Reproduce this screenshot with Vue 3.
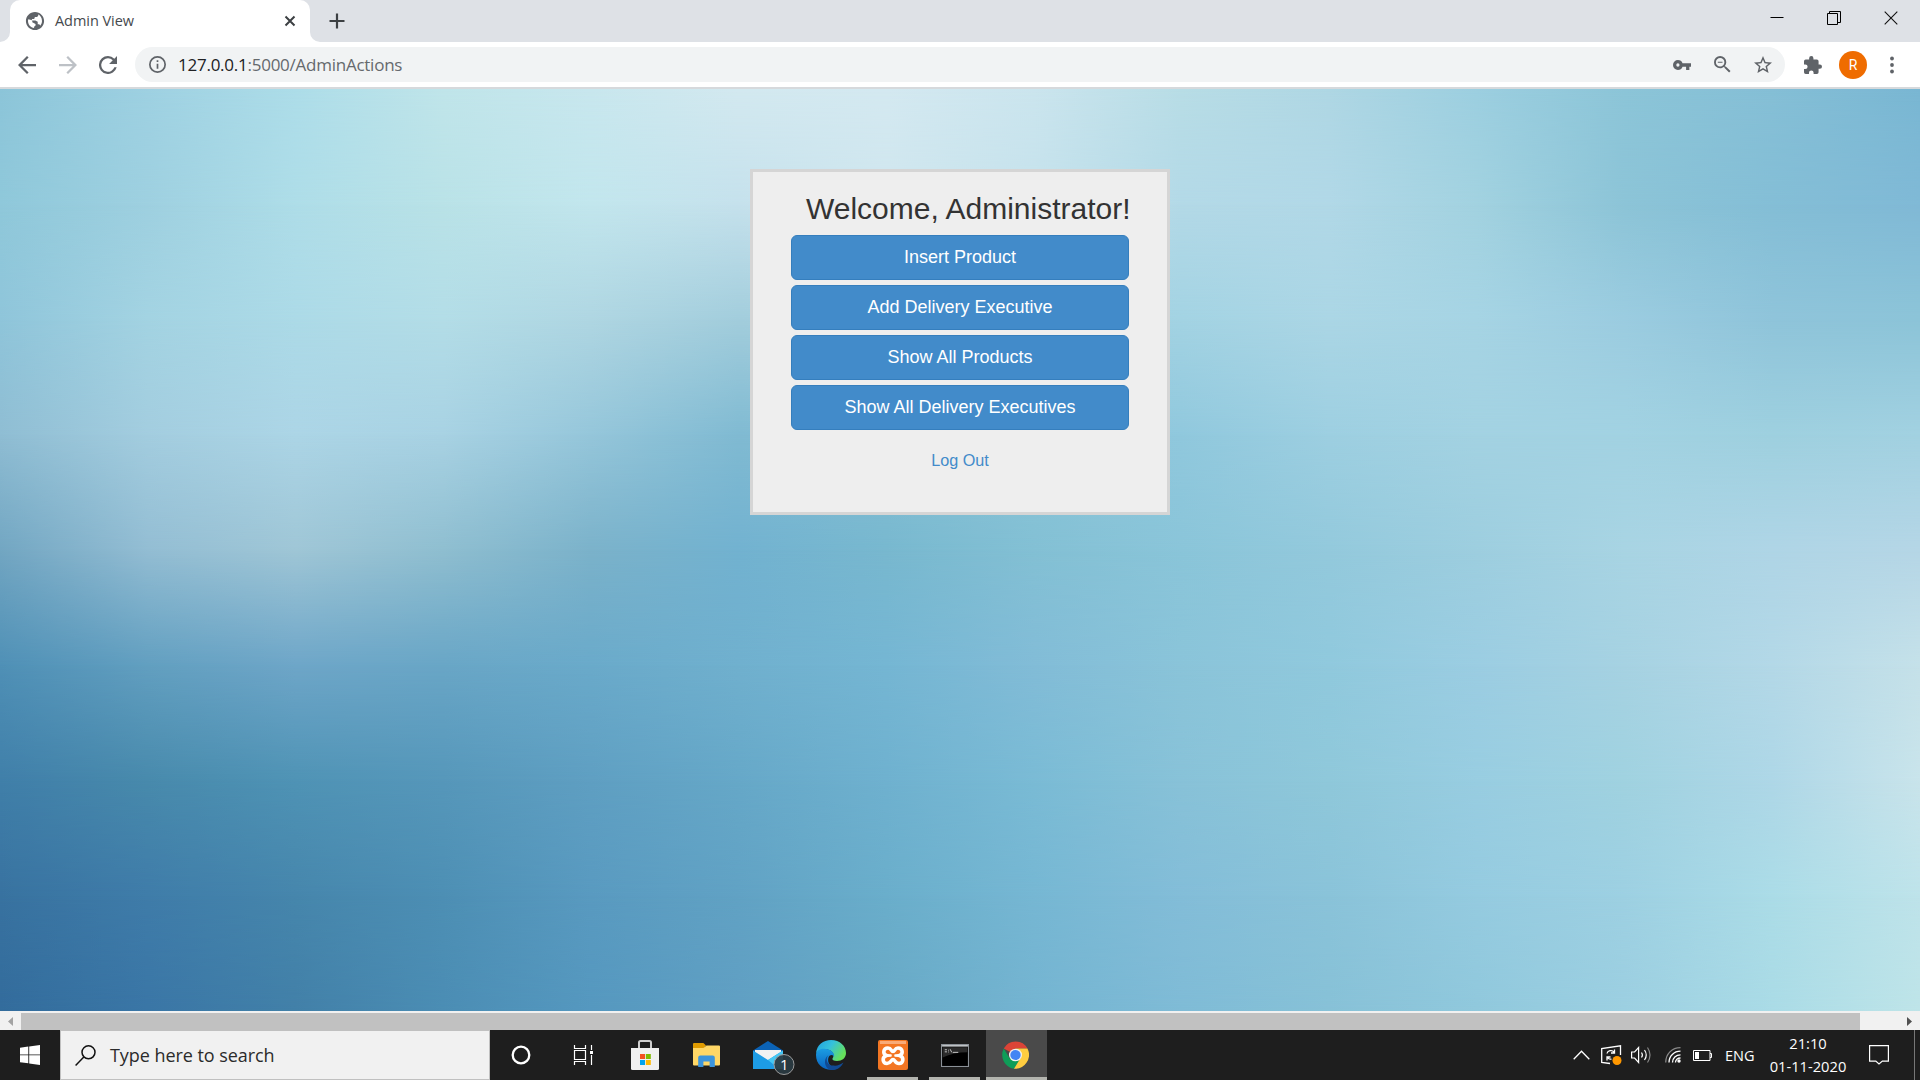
<script setup>
const actions = ['Insert Product', 'Add Delivery Executive', 'Show All Products', 'Show All Delivery Executives']

// Colour mesh for the page backdrop: each row is a horizontal ramp,
// faded in over the row above it.
const mesh = [
  '8cc5d9 9ed1e2 addde9 c0e5ea c8e7ee d3e9f0 d4e9f1 cbe5ee b8dde6 afd7e4 9ccfe0 8cc5d8 85bfd6 79b7d3',
  '8fc8da 9ed0e0 aedde8 b9e2e7 c2e6ed c5e1ec cfe6ee c5e2ec b3d9e7 b1d8e7 a2d2e0 8cc4d7 84bed6 80b9d6',
  '8fc5da a3d3e2 acdae7 b3dde7 afd6e2 a2cddc a5d0de 9fcfde a3d3e3 abd6e5 a6d4e4 9bcce0 8fc4da 8cc4d8',
  '8fbdd3 a3cddf acd5e6 a8d2e3 95c6da 80bad2 85bfd4 8ac4d8 90c8dd 9dcfe1 a3d2e2 a2d2e2 9ed0df a2d1e1',
  '72a6c2 93bdd3 9fc6d6 8fbed0 7bb2ca 72b2d0 78b8cf 83c0d4 8ac5d9 93c9dc 9dcedf a8d4e3 afd5e6 b5d6e6',
  '4f90b6 629fc0 6ea6c8 69a6c6 6aaaca 70b0ce 75b6d3 82bcd7 8ac4d9 90c9dd 9bcde2 a6d2e2 b3d8e7 c5e1e9',
  '407fa9 488aac 4f93b5 5697ba 5f9fc2 66a8c8 6fb1cf 7abbd5 88c2d8 8fc8da 98cde1 a0d2e0 aed7e7 c9e4eb',
  '3872a0 3f7ca9 4686ac 4d8fb4 599ac0 61a2c4 6aaecb 76b7d3 83bdd8 8ac3d9 95cbe0 9dd0e2 abdce7 bee3ea',
  '336c9c 3a76a6 4280a8 4b8db4 5598bf 609fc3 68a9c6 74b4d1 7fbbd6 87c1d7 90c8dc 9ccfe1 aadbe6 bee4e8'
]
const layers = mesh.map((row, i) => {
  const style = { background: `linear-gradient(to right, ${row.split(' ').map(c => '#' + c).join(', ')})` }
  if (i) {
    const step = 100 / (mesh.length - 1)
    style.maskImage = `linear-gradient(to bottom, transparent ${(i - 1) * step}%, #000 ${i * step}%)`
  }
  return style
})
</script>

<template>
  <div class="screen">
    <header class="tabs">
      <svg class="flare" width="10" height="10" viewBox="0 0 10 10"><path d="M10 0v10H0A10 10 0 0 0 10 0Z" fill="#fff"/></svg>
      <div class="tab">
        <svg width="20" height="20" viewBox="1 1 22 22"><path fill="#5f6368" d="M12 2C6.480 2 2 6.480 2 12s4.480 10 10 10 10-4.480 10-10S17.520 2 12 2zM4.300 12C4.300 11.300 4.400 10.600 4.600 10L9 11.200v2.300l3.600 1.800v1.700l-1.600 1.300v1.500C7.200 19.300 4.300 16 4.300 12zM17.800 17.100C17.500 16.100 16.800 15.500 16 15.500h-1v-2.600l-2.600-1.500H8.600V9.700h2.500l.8-2.100h2.500l1.300-1.800V4.700C18 6 19.700 8.800 19.700 12c0 1.900-.7 3.700-1.900 5.100z"/></svg>
        <span class="title">Admin View</span>
        <svg class="x" width="12" height="12" viewBox="0 0 12 12"><path d="M1.500 1.500l9 9M10.500 1.500l-9 9" stroke="#3c4043" stroke-width="2"/></svg>
      </div>
      <svg class="flare" width="10" height="10" viewBox="0 0 10 10"><path d="M0 0v10h10A10 10 0 0 1 0 0Z" fill="#fff"/></svg>
      <svg class="plus" width="16" height="16" viewBox="0 0 16 16"><path d="M8 .5v15M.5 8h15" stroke="#3c4043" stroke-width="2.200"/></svg>
      <div class="winctl">
        <svg width="14" height="14" viewBox="0 0 14 14"><path d="M.5 6.500h13" stroke="#000"/></svg>
        <svg width="14" height="14" viewBox="0 0 14 14"><path d="M.5 2.500h10v11H.5zM2.500 2.500v-2h11v11h-3" fill="none" stroke="#000"/></svg>
        <svg width="14" height="14" viewBox="0 0 14 14"><path d="M.7.7l12.600 12.600M13.300.7L.7 13.300" stroke="#111" stroke-width="1.100"/></svg>
      </div>
    </header>

    <nav class="toolbar">
      <svg class="back" width="18" height="18" viewBox="4 4 16 16"><path fill="#5f6368" d="M20 11H7.830l5.590-5.590L12 4l-8 8 8 8 1.410-1.410L7.830 13H20v-2z"/></svg>
      <svg class="fwd" width="18" height="18" viewBox="4 4 16 16"><path fill="#bdc1c6" d="M12 4l-1.410 1.410L16.170 11H4v2h12.170l-5.580 5.590L12 20l8-8z"/></svg>
      <svg class="reload" width="18" height="18" viewBox="4 4 16 16"><path fill="#5f6368" d="M17.650 6.350A7.958 7.958 0 0 0 12 4a8 8 0 1 0 7.730 10h-2.080A6 6 0 1 1 12 6c1.660 0 3.140.69 4.220 1.780L13 11h7V4l-2.350 2.350z"/></svg>
      <div class="omnibox">
        <svg width="17" height="17" viewBox="2 2 20 20"><path fill="#5f6368" d="M11 7h2v2h-2zm0 4h2v6h-2zm1-9a10 10 0 1 0 0 20 10 10 0 0 0 0-20zm0 18a8 8 0 1 1 0-16 8 8 0 0 1 0 16z"/></svg>
        <span class="url"><b>127.0.0.1</b>:5000/AdminActions</span>
        <svg class="key" width="18" height="10" viewBox="1 6 22 12"><path fill="#5f6368" d="M12.650 10A5.990 5.990 0 0 0 7 6a6 6 0 0 0 0 12 5.990 5.990 0 0 0 5.650-4H17v4h4v-4h2v-4H12.650zM7 14a2 2 0 1 1 0-4 2 2 0 0 1 0 4z"/></svg>
        <svg class="mag" width="17" height="17" viewBox="3 3 18 18"><path fill="#5f6368" d="M15.500 14h-.79l-.28-.27A6.471 6.471 0 0 0 16 9.500 6.500 6.500 0 1 0 9.500 16c1.610 0 3.090-.59 4.230-1.570l.27.28v.79l5 4.990L20.490 19l-4.990-5zm-6 0a4.500 4.500 0 1 1 0-9 4.500 4.500 0 0 1 0 9zM7 9h5v1.100H7z"/></svg>
        <svg class="star" width="18" height="18" viewBox="2 2 20 20"><path fill="#5f6368" d="M22 9.240l-7.190-.62L12 2 9.190 8.630 2 9.240l5.460 4.730L5.820 21 12 17.270 18.180 21l-1.630-7.030L22 9.240zM12 15.400l-3.760 2.270 1-4.280-3.320-2.880 4.380-.38L12 6.100l1.710 4.040 4.380.38-3.320 2.880 1 4.280L12 15.400z"/></svg>
      </div>
      <svg class="puzzle" width="18" height="18" viewBox="2 1 21 21"><path fill="#5f6368" d="M20.500 11H19V7a2 2 0 0 0-2-2h-4V3.500a2.500 2.500 0 0 0-5 0V5H4a2 2 0 0 0-2 2v3.800h1.500a2.700 2.700 0 0 1 0 5.400H2V20a2 2 0 0 0 2 2h3.800v-1.500a2.700 2.700 0 0 1 5.400 0V22H17a2 2 0 0 0 2-2v-4h1.500a2.500 2.500 0 0 0 0-5z"/></svg>
      <span class="avatar">R</span>
      <svg class="dots" width="4" height="18" viewBox="0 0 4 18"><g fill="#5f6368"><circle cx="2" cy="2.500" r="1.900"/><circle cx="2" cy="9" r="1.900"/><circle cx="2" cy="15.500" r="1.900"/></g></svg>
    </nav>

    <main class="page">
      <div v-for="(style, i) in layers" :key="i" class="layer" :style="style"></div>
      <section class="card">
        <h1>Welcome, Administrator!</h1>
        <button v-for="a in actions" :key="a">{{ a }}</button>
        <a>Log Out</a>
      </section>
    </main>

    <div class="scroll">
      <svg width="21" height="17" viewBox="0 0 21 17"><path d="M13 4v9L8 8.500z" fill="#a3a3a3"/></svg>
      <div class="thumb"></div>
      <svg width="60" height="17" viewBox="0 0 60 17"><path d="M47 4v9l5-4.500z" fill="#505050"/></svg>
    </div>

    <footer class="taskbar">
      <div class="start"><svg width="20" height="20" viewBox="0 0 20 20"><path fill="#fff" d="M0 2.800l8.300-1.200v7.900H0zM9.200 1.500L20 0v9.500H9.200zM0 10.300h8.300v8L0 17.200zM9.200 10.300H20V20L9.200 18.500z"/></svg></div>
      <div class="search">
        <svg width="21" height="21" viewBox="0 0 21 21"><g fill="none" stroke="#111" stroke-width="1.500"><circle cx="13.500" cy="7.300" r="6.500"/><path d="M8.800 12L.6 20.400"/></g></svg>
        <span>Type here to search</span>
      </div>
      <div class="apps">
        <div class="app"><svg width="20" height="20" viewBox="0 0 20 20"><circle cx="10" cy="10" r="8.300" fill="none" stroke="#fff" stroke-width="2.300"/></svg></div>
        <div class="app"><svg width="20" height="20" viewBox="0 0 20 20"><path d="M1.500 0v3.500h11V0M1.500 20v-3.500h11V20M1.500 5.500h11v9h-11zM18.500 0v5M18.500 10v10" fill="none" stroke="#fff" stroke-width="1.200"/><path d="M17 6h3v3h-3z" fill="#fff"/></svg></div>
        <div class="app">
          <svg width="28" height="30" viewBox="0 0 28 30"><path d="M8 9V2.500Q8 1 9.500 1h9Q20 1 20 2.500V9" fill="none" stroke="#d0d0d0" stroke-width="2"/><path d="M0 8h28v20.500q0 1.500-1.500 1.500h-25Q0 30 0 28.500z" fill="#f0f0f0"/><path d="M9 14h5v5H9z" fill="#f25022"/><path d="M14.800 14h5v5h-5z" fill="#7fba00"/><path d="M9 20h5v5H9z" fill="#00a4ef"/><path d="M14.800 20h5v5h-5z" fill="#ffb900"/></svg>
        </div>
        <div class="app">
          <svg width="27" height="24" viewBox="0 0 26 24" preserveAspectRatio="none"><path d="M0 1Q0 0 1 0h9l2.500 2.500L10 6H0z" fill="#e09b00"/><path d="M0 5h10l3-2.500h12q1 0 1 1V21.500q0 1-1 1H1q-1 0-1-1z" fill="#ffd766"/><path d="M5 24V14.500Q5 12.500 7 12.500h12q2 0 2 2V24h-5v-5.500h-6V24z" fill="#3b94dc"/></svg>
        </div>
        <div class="app">
          <svg class="mail" width="43" height="35" viewBox="0 0 43 35"><path d="M1 10.500L16 1l15 9.500V19H1z" fill="#0b62b5"/><path d="M3 10h26v10H3z" fill="#f2f2f2"/><path d="M1 10.500L16 20l15-9.500V29H1z" fill="#1d9ce5"/><path d="M16 20l15-9.500V29H27z" fill="#45c8f5"/><circle cx="32" cy="24.500" r="10" fill="#2a3a42" fill-opacity=".93" stroke="#9a9a9a"/></svg>
          <span class="badge">1</span>
        </div>
        <div class="app">
          <svg width="30" height="30" viewBox="0 0 30 30">
            <defs>
              <linearGradient id="e1" x1="0" y1="0" x2="1" y2=".5"><stop offset="0" stop-color="#1f9fdf"/><stop offset=".5" stop-color="#35c1dd"/><stop offset="1" stop-color="#66e05a"/></linearGradient>
              <linearGradient id="e2" x1="0" y1="0" x2="0" y2="1"><stop offset="0" stop-color="#1b9de2"/><stop offset="1" stop-color="#0a62c0"/></linearGradient>
            </defs>
            <path d="M0 13C1 5 7 0 15 0c9 0 15 6 15 13 0 5-4 8-9 8-3.500 0-5-1-4.500-2.500C19 15 17 10 11 9.500 6 9 2 11 0 13z" fill="url(#e1)"/>
            <path d="M0 15c0-5 5-7 10-6 5 .5 9 4 8 8-.5-2.500-4-3-5.500.5-1.500 5 1.500 9.500 8 11.500C10 32 0 26 0 15z" fill="url(#e2)"/>
            <path d="M12.500 15C9 19 11 25 17 25.500c4 .5 7-.5 10.500-3C25 28 20 30.500 15 30 8 28 7 19 12.500 15z" fill="#114a93"/>
          </svg>
        </div>
        <div class="app open">
          <svg width="30" height="30" viewBox="0 0 30 30"><rect width="30" height="30" rx="2" fill="#f37623"/><path d="M2 1h26v3H2z" fill="#f9ab78"/><path d="M15 11.500C13 11.500 13.500 8 10 8c-5 0-5.500 6-1.500 7.500C3.500 17 4.500 23.500 9 23.500c4 0 4-4 6-4s2 4 6 4c4.500 0 5.500-6.500.5-8C25.500 14 25 8 20 8c-3.500 0-3 3.500-5 3.500z" fill="none" stroke="#fff" stroke-width="3.600"/><path d="M10 15.500h3.500M16.500 15.500H20" stroke="#fff" stroke-width="2.400"/></svg>
        </div>
        <div class="app open">
          <svg width="28" height="23" viewBox="0 0 26 22" preserveAspectRatio="none"><rect x=".5" y=".5" width="25" height="21" fill="#000" stroke="#8b9197"/><path d="M1 1h24v1.500H1z" fill="#c9cdd0"/><path d="M1.500 3h23v5Q12 8 1.500 13z" fill="#2b2b2b"/><path d="M3.500 5.500h2M3.500 7.500h2M7 5.500v.8M7 7.300v.7M8.500 5l1.500 3M11 8h5" stroke="#ccc" stroke-width=".9"/></svg>
        </div>
        <div class="app open active">
          <svg class="chrome" width="27" height="28" viewBox="0 0 26 28" preserveAspectRatio="none"><path d="M13 14L1.700 7.500A13 13.500 0 0 1 24.500 7.500H13z" fill="#db4437"/><path d="M13 14L7.500 17.500 1.700 7.500A13.500 14 0 0 0 11.500 27.800L18 17.500z" fill="#0f9d58"/><path d="M13 7.500h11.500A13.500 14 0 0 1 11.500 27.800L18.500 16z" fill="#ffcd40"/><circle cx="13" cy="14" r="6.300" fill="#f1f1f1"/><circle cx="13" cy="14" r="5" fill="#4285f4"/></svg>
        </div>
      </div>
      <div class="tray">
        <svg width="17" height="10" viewBox="0 0 17 10"><path d="M.7 9.300l7.800-8 7.800 8" fill="none" stroke="#fff" stroke-width="1.300"/></svg>
        <svg class="sync" width="21" height="20" viewBox="0 0 21 20"><path d="M9 18.500L.7 17.500v-14L19.500.8V10" fill="none" stroke="#fff" stroke-width="1.300"/><path d="M6 8.500c.5-3 5-4 7-1.500M13.500 4.500v3.500H10M6 15.500V12h3.500M6.500 12.500c1 1.500 2.500 2 4 1.500" fill="none" stroke="#fff" stroke-width="1.300"/><circle cx="16" cy="15.500" r="4.500" fill="#ff9800"/></svg>
        <svg class="vol" width="21" height="18" viewBox="0 0 21 18"><path d="M.6 6h3l4-4.500v15L3.600 12h-3z" fill="none" stroke="#fff" stroke-width="1.200"/><path d="M10.500 6.500q1.800 2.500 0 5M13.500 4q3.500 5 0 10" fill="none" stroke="#fff" stroke-width="1.200"/><path d="M16.500 1.500q5 7.500 0 15" fill="none" stroke="#888" stroke-width="1.200"/></svg>
        <svg class="wifi" width="16" height="16" viewBox="0 0 16 16"><g fill="none" stroke-width="1.300"><path d="M.7 15.500C.7 7 7 .7 15.500.7" stroke="#888"/><path d="M4 15.500C4 9 9 4.200 15.500 4.200M7.500 15.500c0-4.500 3.500-7.700 8-7.700M10.500 15.500c0-2.500 2-4.500 5-4.500" stroke="#fff"/></g><circle cx="14" cy="14" r="1.700" fill="#fff"/></svg>
        <svg class="bat" width="19" height="11" viewBox="0 0 19 11"><path d="M.5.5h16.500v10H.5zM17 3.500h1.500v4H17" fill="none" stroke="#fff"/><path d="M2 2h4v7H2z" fill="#fff"/></svg>
        <span class="lang">ENG</span>
        <div class="clock"><span class="time">21:10</span><span class="date">01-11-2020</span></div>
        <svg class="note" width="20" height="20" viewBox="0 0 20 20"><path d="M.6.6h18.800v15.500h-6L10 19l-3.200-2.900H.6z" fill="none" stroke="#fff" stroke-width="1.200"/></svg>
        <i class="peek"></i>
      </div>
    </footer>
  </div>
</template>

<style>
body { margin: 0; overflow: hidden; }
</style>

<style scoped>
* { box-sizing: border-box; }
svg { display: block; flex: none; }
.screen { width: 1920px; height: 1080px; display: flex; flex-direction: column; font-family: "Open Sans", "Noto Sans", sans-serif; }
.tabs { height: 42px; flex: none; background: #dee1e6; display: flex; align-items: flex-end; }
.tab { height: 42px; width: 300px; background: #fff; border-radius: 10px 10px 0 0; display: flex; align-items: center; padding-left: 15px; }
.tab .title { margin: -2px 0 0 10px; font-size: 14.500px; color: #45494d; letter-spacing: -.05px; white-space: nowrap; }
.tab .x { margin-left: auto; margin-right: 14px; }
.plus { margin: 0 0 13px 9px; }
.winctl { margin: 0 22px 17px auto; display: flex; gap: 43px; }
.toolbar { height: 47px; flex: none; background: #fff; border-bottom: 2px solid #d6d9dc; display: flex; align-items: center; }
.back { margin-left: 18px; }
.fwd { margin-left: 23px; }
.reload { margin-left: 22px; }
.omnibox { margin-left: 18px; width: 1650px; height: 35px; border-radius: 18px; background: #f1f3f4; display: flex; align-items: center; padding-left: 14px; }
.url { margin-left: 12px; font-size: 17px; color: #65696d; white-space: nowrap; letter-spacing: -.25px; }
.url b { font-weight: 400; color: #202124; }
.key { margin-left: auto; }
.mag { margin-left: 23px; }
.star { margin: 0 13px 0 23px; }
.puzzle { margin-left: 19px; }
.avatar { margin-left: 17px; width: 28px; height: 28px; border-radius: 50%; background: #ef6c00; color: #fff; font: 14px/28px Roboto, sans-serif; text-align: center; }
.dots { margin-left: 23px; }
.page { height: 922px; flex: none; display: grid; grid-template: 100% / 100%; }
.layer { grid-area: 1 / 1; }
.card { grid-area: 1 / 1; z-index: 1; justify-self: center; margin-top: 80px; width: 420px; height: 346px; background: #eee; border: 3px solid #d5d5d5; padding: 17px 38px 0; display: flex; flex-direction: column; font-family: "Liberation Sans", Arial, sans-serif; }
h1 { margin: 0 0 6px 15px; font-size: 30px; line-height: 40px; font-weight: 400; color: #333; white-space: nowrap; }
button { height: 45px; flex: none; margin: 0 0 5px; padding: 0; background: #428bca; border: 1px solid #357ebd; border-radius: 6px; color: #fff; font: 18px "Liberation Sans", Arial, sans-serif; }
.card a { align-self: center; margin-top: 14px; color: #428bca; font-size: 16.200px; line-height: 22px; }
.scroll { height: 19px; flex: none; background: #f1f1f1; padding-top: 2px; display: flex; }
.thumb { flex: 1; background: #c1c1c1; }
.taskbar { height: 50px; flex: none; background: #1e1e1e; display: flex; color: #fff; }
.start { width: 60px; display: grid; place-items: center; }
.search { width: 430px; background: #f1f1f1; border: 1px solid #c0c0c0; display: flex; align-items: center; padding-left: 14px; color: #2b2b2b; }
.search span { margin-left: 14px; font-size: 18px; letter-spacing: -.06px; white-space: nowrap; }
.apps { display: flex; }
.app { width: 61px; margin-right: 1px; height: 50px; position: relative; display: grid; place-items: center; }
.open::after { content: ""; position: absolute; left: 5px; right: 5px; bottom: 0; height: 3px; background: #b3b4ae; }
.active { background: #4a4a4a; }
.active::after { left: 0; right: 0; }
.mail { margin: 5px 0 0 10px; }
.badge { position: absolute; left: 42px; top: 23px; font-size: 15px; line-height: 22px; }
.chrome { margin-right: 2px; }
.tray { margin-left: auto; display: flex; align-items: center; }
.sync { margin-left: 11px; }
.vol { margin-left: 9px; }
.wifi { margin-left: 13px; }
.bat { margin-left: 12px; }
.lang { margin-left: 13px; font-size: 14.500px; width: 28px; }
.clock { margin-left: 9px; width: 92px; display: flex; flex-direction: column; align-items: center; font-size: 14.700px; line-height: 23px; white-space: nowrap; }
.note { margin-left: 15px; }
.peek { margin-left: 25px; width: 6px; height: 50px; border-left: 1px solid #777; }
</style>
